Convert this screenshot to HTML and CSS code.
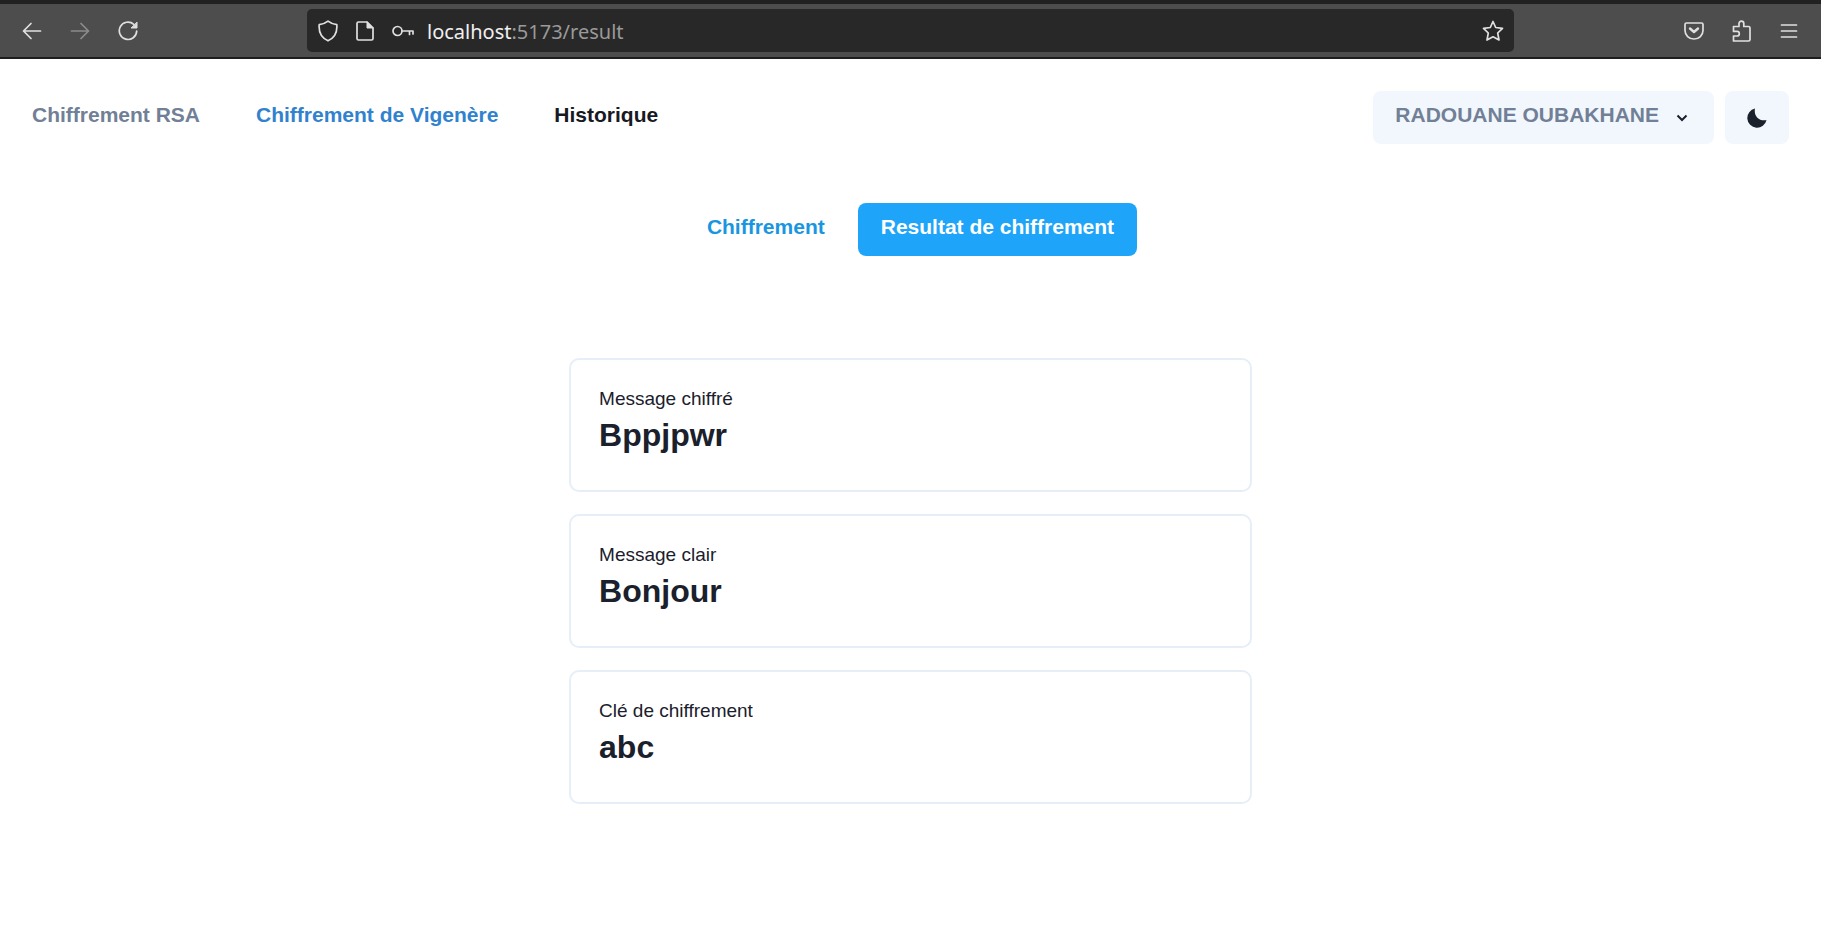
FILE: index.html
```html
<!DOCTYPE html>
<html lang="fr">
<head>
<meta charset="utf-8">
<title>Résultat de chiffrement</title>
<link rel="stylesheet" href="styles.css">
</head>
<body>
<div class="browser">
  <div class="browser-nav">
    <button class="tool" aria-label="Page précédente"><svg width="20" height="20" viewBox="0 0 20 20"><path d="M18.500 10H1.500M9 2.500 1.500 10 9 17.500"/></svg></button>
    <button class="tool tool-off" aria-label="Page suivante"><svg width="20" height="20" viewBox="0 0 20 20"><path d="M1.500 10h17M11 2.500 18.500 10 11 17.500"/></svg></button>
    <button class="tool" aria-label="Actualiser"><svg width="20" height="20" viewBox="0 0 20 20"><path d="M15.800 3.300A8.700 8.700 0 1 0 18.700 10"/><path class="solid" d="M19 1.500v5.500h-5.500z"/></svg></button>
  </div>
  <div class="address">
    <svg width="20" height="22" viewBox="0 0 20 22"><path d="M10 1.200Q13.500 4 18.800 4.700Q19.800 16.500 10 20.800Q.2 16.500 1.200 4.700Q6.500 4 10 1.200z"/></svg>
    <svg width="18" height="20" viewBox="0 0 18 20"><path d="M2.500 1H11l6 6v10.500a1.500 1.500 0 0 1-1.500 1.500h-13A1.500 1.500 0 0 1 1 17.500v-15A1.500 1.500 0 0 1 2.500 1z"/><path class="solid" d="M11 1v6h6z"/></svg>
    <svg width="22" height="14" viewBox="0 0 22 14"><circle cx="5.500" cy="7" r="4.500"/><path d="M10 7H21v3M17.500 7v3.500"/></svg>
    <div class="url"><span class="host">localhost</span>:5173/result</div>
    <button class="tool" aria-label="Marquer cette page"><svg width="22" height="22" viewBox="0 0 22 22"><path d="M11 1.500 13.700 7.500 20.500 8.300 15.700 13 17 20 11 16.800 5 20 6.300 13 1.500 8.300 8.300 7.500z"/></svg></button>
  </div>
  <div class="browser-actions">
    <button class="tool" aria-label="Pocket"><svg width="20" height="20" viewBox="0 0 20 20"><path d="M2.500 2h15A1.500 1.500 0 0 1 19 3.500V9.500a9 8.500 0 0 1-18 0V3.500A1.500 1.500 0 0 1 2.500 2z"/><path class="thick" d="M6 7.500 10 11l4-3.500"/></svg></button>
    <button class="tool" aria-label="Extensions"><svg width="20" height="22" viewBox="0 0 20 22"><path d="M1.500 6.500h5.500V3.500a2.400 2.400 0 0 1 4.800 0v3h4.700A1.500 1.500 0 0 1 18 8v11.500a1.500 1.500 0 0 1-1.500 1.500h-15v-5h3.500a2.200 2.200 0 0 0 0-4.600h-3.500z"/></svg></button>
    <button class="tool" aria-label="Menu"><svg width="18" height="16" viewBox="0 0 18 16"><path d="M1.500 2h15M1.500 8h15M1.500 14h15"/></svg></button>
  </div>
</div>
<header class="header">
  <nav class="links">
    <a class="link" href="#rsa">Chiffrement RSA</a>
    <a class="link link-active" href="#vigenere">Chiffrement de Vigenère</a>
    <a class="link link-dark" href="#historique">Historique</a>
  </nav>
  <div class="account">
    <button class="btn user"><span>RADOUANE OUBAKHANE</span><svg width="12" height="8" viewBox="0 0 12 8"><path d="M1.500 1.500 6 6l4.500-4.500"/></svg></button>
    <button class="btn theme" aria-label="Mode sombre"><svg width="20" height="20" viewBox="0 0 20 20"><path class="moon" d="M8 .5A9.700 9.700 0 1 0 19.500 12 C12 13.500 6.500 8 8 .5z"/></svg></button>
  </div>
</header>
<main class="main">
  <nav class="tabs">
    <a class="tab" href="#chiffrement">Chiffrement</a>
    <a class="tab tab-active" href="#resultat">Resultat de chiffrement</a>
  </nav>
  <section class="cards">
    <article class="card"><p class="label">Message chiffré</p><h2 class="value">Bppjpwr</h2></article>
    <article class="card"><p class="label">Message clair</p><h2 class="value">Bonjour</h2></article>
    <article class="card"><p class="label">Clé de chiffrement</p><h2 class="value">abc</h2></article>
  </section>
</main>
</body>
</html>
```
FILE: styles.css
```css
* { box-sizing: border-box; }
body {
  margin: 0;
  background: #fff;
  color: #1a202c;
  font-family: "Liberation Sans", Arial, sans-serif;
}
button { border: 0; background: none; padding: 0; font: inherit; color: inherit; }
a { text-decoration: none; }
svg { display: block; flex: none; }

.browser {
  display: grid;
  grid-template-columns: 283px 1fr 283px;
  gap: 12px;
  align-items: center;
  height: 59px;
  border-top: 4px solid #212121;
  border-bottom: 2px solid #1e1e1e;
  background: #4d4d4d;
  color: #e0e0e0;
  padding: 0 12px;
}
.browser svg { fill: none; stroke: currentColor; stroke-width: 1.7; stroke-linejoin: round; stroke-linecap: round; }
.browser .solid { fill: currentColor; stroke-width: 1; }
.browser .thick { stroke-width: 2.4; }
.browser-nav { display: flex; gap: 28px; padding-left: 10px; }
.tool-off { color: #8c8c8c; }
.address {
  display: flex;
  align-items: center;
  height: 43px;
  border-radius: 5px;
  background: #282828;
  padding: 0 10px 0 11px;
}
.address > svg { margin-right: 18px; }
.address > svg:nth-of-type(3) { margin-right: 13px; }
.url { flex: 1; padding-top: 2px; font: 20px/28px "Noto Sans", sans-serif; color: #9a9a9a; }
.host { color: #f0f0f0; }
.browser-actions { display: flex; justify-content: flex-end; align-items: center; gap: 28px; padding-right: 11px; }

.header {
  display: flex;
  justify-content: space-between;
  align-items: center;
  padding: 32px 32px 0;
  font-size: 21px;
  line-height: 24px;
  font-weight: bold;
}
.links { display: flex; gap: 56px; }
.link { padding-bottom: 5px; color: #718096; }
.link-active { color: #3182ce; }
.link-dark { color: #171923; }
.account { display: flex; gap: 11px; }
.btn { display: flex; align-items: center; height: 53px; border-radius: 8px; background: #f2f7fd; color: #1a202c; }
.user { gap: 17px; padding: 0 26px 0 22px; }
.user span { padding-bottom: 5px; color: #718096; font-weight: bold; }
.user svg { fill: none; stroke: currentColor; stroke-width: 2; }
.theme { width: 64px; justify-content: center; }
.moon { fill: currentColor; }

.tabs { display: flex; justify-content: center; gap: 10px; padding-top: 59px; }
.tab {
  padding: 12px 23px 17px;
  border-radius: 8px;
  font-size: 21px;
  line-height: 24px;
  font-weight: bold;
  color: #1a96e0;
}
.tab-active { background: #1ea5fa; color: #fff; }
.cards { display: grid; gap: 22px; width: 37.5%; margin: 102px auto 0; }
.card { border: 2px solid #e6eef8; border-radius: 10px; padding: 27px 28px 35px; }
.label { margin: 0; font-size: 19px; line-height: 24px; }
.value { margin: 6px 0 0; font-size: 32px; line-height: 37px; padding-bottom: 1px; }
```
